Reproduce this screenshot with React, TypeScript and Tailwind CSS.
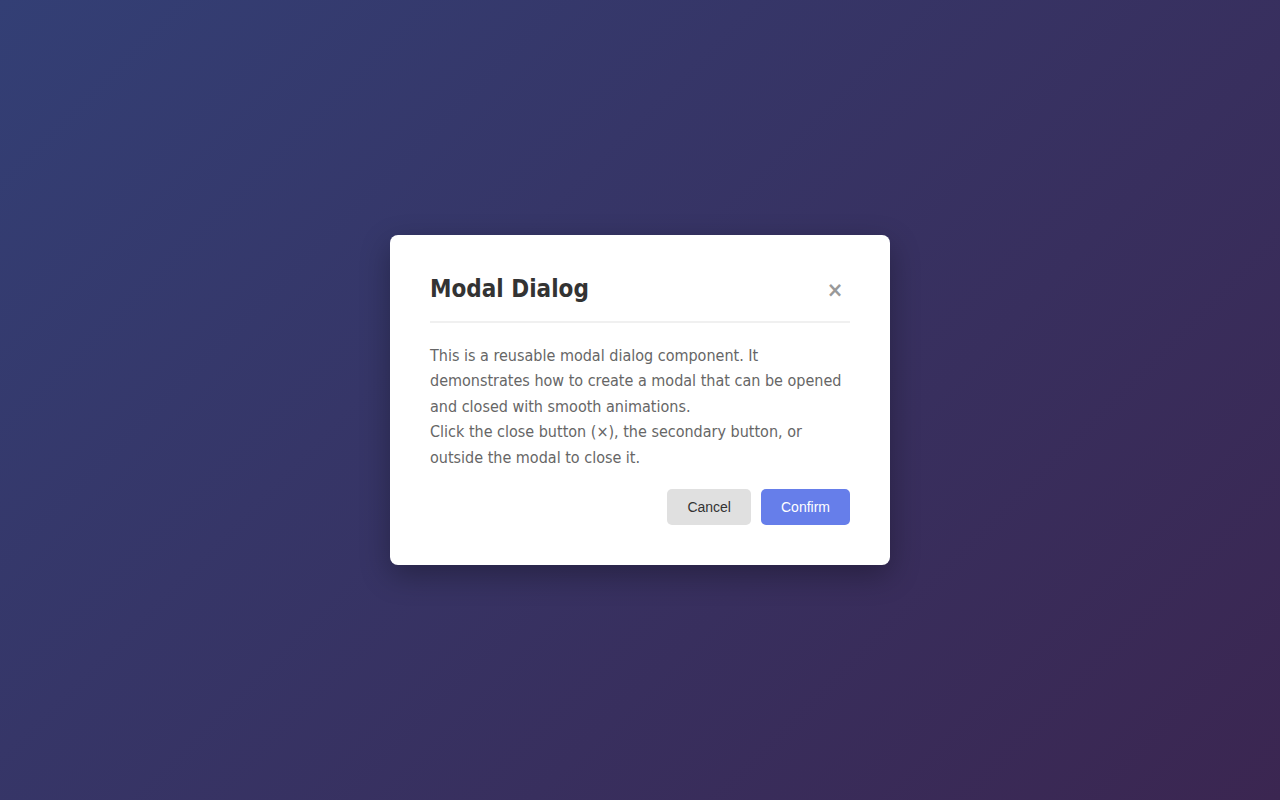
export default function App() {
  return (
    <div className="flex min-h-screen w-full items-center justify-center bg-[linear-gradient(135deg,#333f75_0%,#3b2651_100%)]">
      <div className="w-[500px] rounded-lg bg-white p-10 shadow-[0_10px_30px_rgba(0,0,0,0.3)] font-['DejaVu_Sans_Condensed',sans-serif]">
        <div className="flex items-center justify-between border-b-2 border-[#f0f0f0] pb-4">
          <h2 className="text-2xl leading-[29px] font-bold text-[#333333]">Modal Dialog</h2>
          <button className="flex h-[30px] w-[30px] items-center justify-center text-[22px] leading-none font-bold text-[#999999]">
            ×
          </button>
        </div>
        <div className="mt-5 text-base leading-[1.6] text-[#666666]">
          <p>This is a reusable modal dialog component. It demonstrates how to create a modal that can be opened and closed with smooth animations.</p>
          <p>Click the close button (×), the secondary button, or outside the modal to close it.</p>
        </div>
        <div className="mt-[19px] flex justify-end gap-2.5 font-['Liberation_Sans',Arial,sans-serif] text-sm">
          <button className="h-9 rounded-[5px] bg-[#e0e0e0] px-5 text-[#333333]">Cancel</button>
          <button className="h-9 rounded-[5px] bg-[#667eea] px-5 text-white">Confirm</button>
        </div>
      </div>
    </div>
  );
}
